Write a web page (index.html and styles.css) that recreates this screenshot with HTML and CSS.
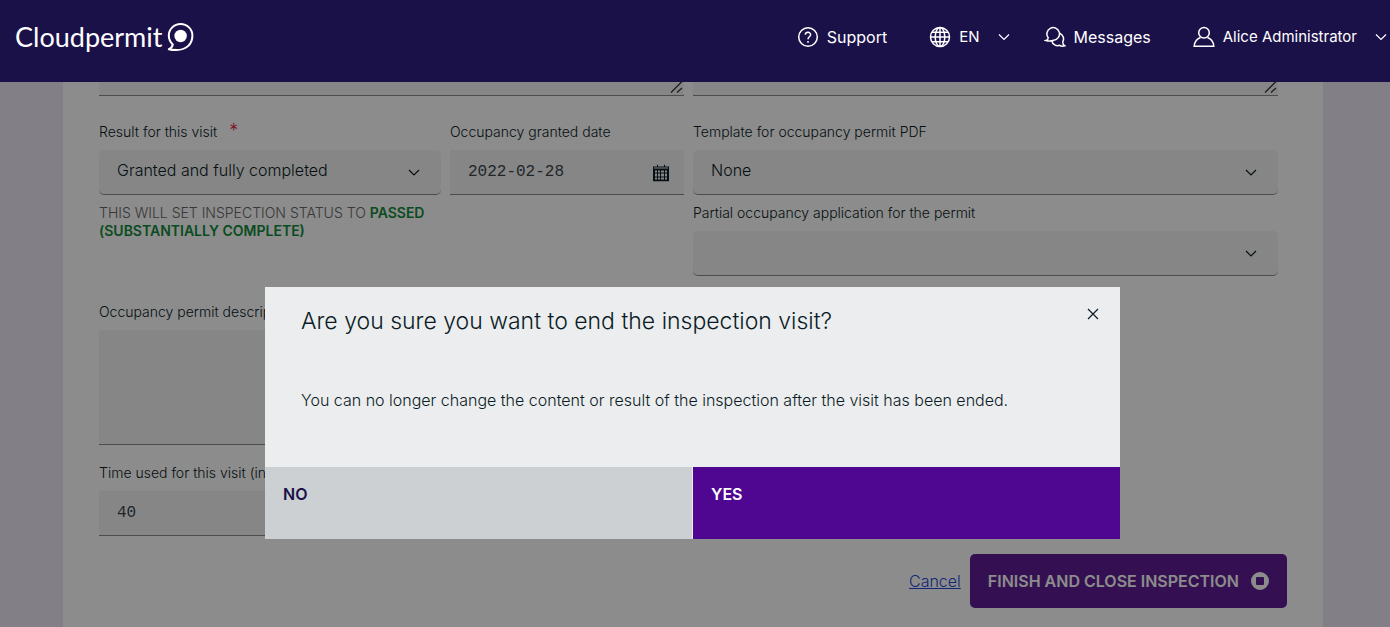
FILE: index.html
```html
<!DOCTYPE html>
<html lang="en">
<head>
<meta charset="utf-8">
<meta name="viewport" content="width=device-width, initial-scale=1">
<title>Cloudpermit</title>
<link rel="stylesheet" href="styles.css">
</head>
<body>
<header class="topbar">
  <a class="brand" href="#">Cloudpermit
    <svg class="brand-mark" width="28" height="30" viewBox="0 0 28 30" aria-hidden="true">
      <path d="M6.800 22.500C3.700 19.500 2.800 17 2.800 13.500A11.800 11.500 0 0 1 26.400 13.500C26.400 22.500 20 28 10.500 28C7.500 28 5 27.800 2.800 27.200C5 26.300 6.300 25 6.800 22.500Z" fill="none" stroke="currentColor" stroke-width="2" stroke-linejoin="round"/>
      <circle cx="14.600" cy="14" r="6.200" fill="currentColor"/>
    </svg>
  </a>
  <nav class="nav" aria-label="Main">
    <a class="nav-item nav-support" href="#">
      <svg width="22" height="22" viewBox="0 0 22 22" class="line" aria-hidden="true"><circle cx="11" cy="11" r="9.300"/><path d="M8.300 8.800C8.400 5.500 13.700 5.600 13.600 8.800C13.500 10.800 11 10.800 11 13.200M11 15v1.700"/></svg>
      Support</a>
    <button class="nav-item nav-small nav-lang" type="button">
      <svg width="22" height="22" viewBox="0 0 22 22" class="line" aria-hidden="true"><circle cx="11" cy="11" r="9.500"/><ellipse cx="11" cy="11" rx="4.800" ry="9.500"/><path d="M11 1.500v19M1.500 11h19M3 6.200h16M3 15.800h16"/></svg>
      EN
      <svg class="line thin" width="12" height="8" viewBox="0 0 12 8" aria-hidden="true"><path d="M1 1.500l5 5 5-5"/></svg></button>
    <a class="nav-item nav-messages" href="#">
      <svg width="22" height="22" viewBox="0 0 22 22" class="line" aria-hidden="true"><path d="M2 14.500C3.600 14 4.200 13 4.200 11.800A6.300 6.300 0 1 1 9.800 14.200C7 15.300 4.500 15.300 2 14.500Z"/><path d="M15.600 7.300C19.300 8.800 20.500 12.800 18.700 16C18.700 17.800 19.300 19 20.800 19.800C18.500 20.500 17 20.200 15.800 19.300C12.200 20.500 8.600 18.500 7.800 15"/></svg>
      Messages</a>
    <button class="nav-item nav-small nav-user" type="button">
      <svg width="22" height="22" viewBox="0 0 22 22" class="line" aria-hidden="true"><circle cx="11" cy="6.800" r="5.300"/><path d="M7.500 11.500C3.500 13 1.500 16 1.200 20.200H20.800C20.500 16 18.500 13 14.500 11.500"/></svg>
      Alice Administrator
      <svg class="line thin" width="12" height="8" viewBox="0 0 12 8" aria-hidden="true"><path d="M1 1.500l5 5 5-5"/></svg></button>
  </nav>
</header>

<main class="page">
  <form class="panel">
    <div class="row notes">
      <div class="grip-box"><textarea class="control note" aria-label="Notes"></textarea>
        <svg class="grip" width="14" height="14" viewBox="0 0 14 14" aria-hidden="true"><path d="M1 11.500L12 .5M7 11.500L12 7"/></svg></div>
      <div class="grip-box"><textarea class="control note" aria-label="Additional notes"></textarea>
        <svg class="grip" width="14" height="14" viewBox="0 0 14 14" aria-hidden="true"><path d="M1 11.500L12 .5M7 11.500L12 7"/></svg></div>
    </div>
    <div class="row">
      <div class="result-row">
        <div class="field">
          <label for="result">Result for this visit <span class="required">*</span></label>
          <div class="control-box">
            <select class="control rounded" id="result"><option>Granted and fully completed</option></select>
            <svg class="end-icon line" width="14" height="10" viewBox="0 0 14 10" aria-hidden="true"><path d="M2 2l5 5 5-5"/></svg>
          </div>
          <p class="status">THIS WILL SET INSPECTION STATUS TO <strong>PASSED (SUBSTANTIALLY COMPLETE)</strong></p>
        </div>
        <div class="field">
          <label for="granted">Occupancy granted date</label>
          <div class="control-box date">
            <input class="control mono" id="granted" type="text" value="2022-02-28">
            <svg class="end-icon" width="16" height="17" viewBox="0 0 16 17" aria-hidden="true"><path fill="currentColor" fill-rule="evenodd" d="M0 2h4V0h1v2h6V0h1v2h4v15H0ZM1 3v1h14V3ZM2 6v2h2V6ZM5 6v2h2V6ZM8 6v2h3V6ZM12 6v2h2V6ZM2 9v3h2V9ZM5 9v3h2V9ZM8 9v3h3V9ZM12 9v3h2V9ZM2 13v2h2v-2ZM5 13v2h2v-2ZM8 13v2h3v-2ZM12 13v2h2v-2Z"/></svg>
          </div>
        </div>
      </div>
      <div class="stack">
        <div class="field">
          <label for="template">Template for occupancy permit PDF</label>
          <div class="control-box">
            <select class="control rounded" id="template"><option>None</option></select>
            <svg class="end-icon line" width="14" height="10" viewBox="0 0 14 10" aria-hidden="true"><path d="M2 2l5 5 5-5"/></svg>
          </div>
        </div>
        <div class="field">
          <label for="partial">Partial occupancy application for the permit</label>
          <div class="control-box">
            <select class="control rounded" id="partial"><option></option></select>
            <svg class="end-icon line" width="14" height="10" viewBox="0 0 14 10" aria-hidden="true"><path d="M2 2l5 5 5-5"/></svg>
          </div>
        </div>
      </div>
    </div>
    <div class="row lower">
      <div class="stack wide-gap">
        <div class="field">
          <label for="description">Occupancy permit description</label>
          <textarea class="control description" id="description"></textarea>
        </div>
        <div class="field">
          <label for="time">Time used for this visit (in minutes)</label>
          <input class="control mono" id="time" type="text" value="40">
        </div>
      </div>
    </div>
    <div class="actions">
      <a class="cancel" href="#">Cancel</a>
      <button class="finish" type="button">FINISH AND CLOSE INSPECTION
        <svg width="18" height="18" viewBox="0 0 18 18" aria-hidden="true"><path fill="currentColor" fill-rule="evenodd" d="M9 0a9 9 0 1 1 0 18a9 9 0 1 1 0-18ZM6 5Q5 5 5 6v6q0 1 1 1h6q1 0 1-1V6q0-1-1-1Z"/></svg>
      </button>
    </div>
  </form>
</main>

<div class="backdrop">
  <dialog class="dialog" open aria-labelledby="dialog-title">
    <div class="dialog-body">
      <div class="dialog-head">
        <h2 id="dialog-title">Are you sure you want to end the inspection visit?</h2>
        <button class="close" type="button" aria-label="Close"><svg class="line" width="14" height="14" viewBox="0 0 14 14" aria-hidden="true"><path d="M2 2l10 10M12 2L2 12"/></svg></button>
      </div>
      <p>You can no longer change the content or result of the inspection after the visit has been ended.</p>
    </div>
    <div class="dialog-actions">
      <button class="no" type="button">NO</button>
      <button class="yes" type="button">YES</button>
    </div>
  </dialog>
</div>
</body>
</html>
```
FILE: styles.css
```css
* { box-sizing: border-box; }

body {
  margin: 0;
  height: 100vh;
  overflow: hidden;
  background: #eee8f5;
  color: #0b1c26;
  font: 300 16px/18px Inter, "Liberation Sans", sans-serif;
}

button, input, select, textarea {
  border: 0;
  border-radius: 0;
  color: inherit;
  font: inherit;
}

button { cursor: pointer; }

.line {
  fill: none;
  stroke: currentColor;
  stroke-width: 1.5;
}

.thin { stroke-width: 1.2; }
.end-icon.line, .close .line { stroke-width: 1.2; }

.topbar {
  position: relative;
  z-index: 3;
  display: flex;
  align-items: center;
  justify-content: space-between;
  height: 82px;
  padding: 0 3px 8px 15px;
  background: #1b1149;
  color: #fff;
}

.brand {
  display: flex;
  align-items: center;
  gap: 4px;
  color: inherit;
  font: 400 27px/32px Lato, sans-serif;
  text-decoration: none;
}

.nav { display: flex; align-items: center; }

.nav-item {
  display: flex;
  align-items: center;
  gap: 8px;
  padding: 0;
  background: none;
  color: inherit;
  font-size: 16px;
  font-weight: 400;
  text-decoration: none;
  white-space: nowrap;
}

.nav-small { font-size: 15px; }
.nav-lang { margin-left: 42px; }
.nav-lang .thin, .nav-user .thin { margin-left: 10px; }
.nav-messages { margin-left: 34px; }
.nav-user { margin-left: 42px; }

.page {
  height: calc(100vh - 82px);
  padding: 0 67px 0 63px;
}

.panel {
  min-height: 100%;
  padding: 0 36px 19px;
  background: #fff;
}

.row {
  display: grid;
  grid-template-columns: 1fr 1fr;
  gap: 9px;
  margin: 0 9px 27px 0;
}

.result-row {
  display: grid;
  grid-template-columns: 342fr 234fr;
  align-items: start;
  gap: 9px;
}

.field, .stack {
  display: flex;
  flex-direction: column;
  gap: 9px;
}

.wide-gap { gap: 19px; }
.row.lower { margin-bottom: 18px; }

label, .status { font-size: 14px; }

.required { margin-left: 8px; color: #e0203a; font-size: 18px; line-height: 14px; }

.status { margin: 0; color: #666; }
.status strong { color: #128a3c; font-weight: 600; }

.control-box, .grip-box { position: relative; display: flex; }

.control {
  width: 100%;
  height: 45px;
  padding: 0 18px 4px;
  border-bottom: 1px solid #8a8a8a;
  background: #f4f4f4;
  appearance: none;
  resize: none;
}

.rounded { border-radius: 5px; }
.mono {
  padding-bottom: 1px;
  color: #3c464c;
  font-family: "Liberation Mono", monospace;
}
.note { height: 14px; }
.description { height: 115px; }

.end-icon {
  position: absolute;
  right: 20px;
  top: 50%;
  transform: translateY(-50%);
  pointer-events: none;
}

.date .end-icon { right: 15px; }

.grip {
  position: absolute;
  right: 0;
  bottom: 1px;
  fill: none;
  stroke: #333;
  stroke-width: 1.2;
}

.actions {
  display: flex;
  align-items: center;
  justify-content: flex-end;
  gap: 9px;
}

.cancel { color: #2547d8; }

.finish {
  display: flex;
  align-items: center;
  gap: 12px;
  height: 54px;
  padding: 0 18px;
  border-radius: 5px;
  background: #5f1d95;
  color: #fff;
  font-weight: 600;
}

.backdrop {
  position: fixed;
  inset: 82px 0 0;
  z-index: 2;
  display: flex;
  align-items: flex-start;
  justify-content: center;
  padding: 205px 5px 0 0;
  background: rgba(0, 0, 0, 0.45);
}

.dialog {
  position: static;
  width: 855px;
  max-width: 100%;
  margin: 0;
  padding: 0;
  border: 0;
  background: #ebedee;
  color: #0b1c26;
}

.dialog-body { padding: 18px 18px 58px 36px; }

.dialog-head {
  display: flex;
  align-items: flex-start;
  justify-content: space-between;
}

.dialog h2 {
  margin: 0;
  font-size: 23px;
  font-weight: 300;
  line-height: 32px;
}

.close { display: flex; padding: 2px; background: none; }
.dialog p { margin: 54px 0 0; }

.dialog-actions {
  display: grid;
  grid-template-columns: 1fr 1fr;
  gap: 1px;
}

.no, .yes {
  display: flex;
  align-items: flex-start;
  height: 72px;
  padding: 18px;
  font-weight: 600;
}

.no { background: #ccd0d3; color: #1b1149; }
.yes { background: #4f0690; color: #fff; }
```
